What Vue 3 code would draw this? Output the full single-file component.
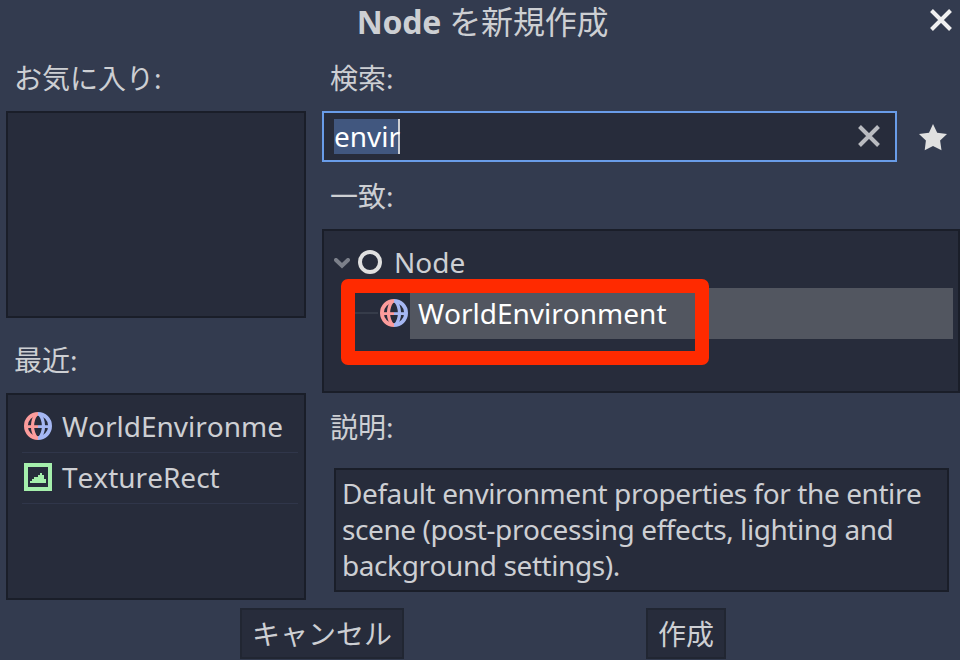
<script setup>
import { ref } from 'vue'

const query = ref('envir')

const recent = [
  { name: 'WorldEnvironme', icon: 'world' },
  { name: 'TextureRect', icon: 'texture' },
]

const description = [
  'Default environment properties for the entire',
  'scene (post-processing effects, lighting and',
  'background settings).',
]
</script>

<template>
  <div class="dialog">
    <!-- shared globe icon -->
    <svg class="defs" width="0" height="0">
      <defs>
        <clipPath id="left-half"><rect x="0" y="0" width="14" height="28" /></clipPath>
        <clipPath id="right-half"><rect x="14" y="0" width="14" height="28" /></clipPath>
        <g id="globe-lines" fill="none">
          <circle cx="14" cy="14" r="12.1" stroke-width="3.8" />
          <path d="M12.5 2C9.5 6 8.5 10 8.5 14s1 8 4 12M15.5 2c3 4 4 8 4 12s-1 8-4 12" stroke-width="3.2" />
          <path d="M2 14.6h24" stroke-width="2.8" />
        </g>
        <symbol id="globe" viewBox="0 0 28 28">
          <g clip-path="url(#left-half)" stroke="#fc9c9c"><use href="#globe-lines" /></g>
          <g clip-path="url(#right-half)" stroke="#a5b7f3"><use href="#globe-lines" /></g>
        </symbol>
      </defs>
    </svg>

    <header class="titlebar">
      <h1><b>Node</b> を新規作成</h1>
      <svg class="close" width="24" height="24" viewBox="0 0 24 24">
        <path d="M2.5 2.5l19 19M21.5 2.5l-19 19" />
      </svg>
    </header>

    <main class="body">
      <section class="left">
        <div class="label favorites-label">お気に入り:</div>
        <div class="panel favorites"></div>
        <div class="label recent-label">最近:</div>
        <div class="panel recent">
          <div v-for="item in recent" :key="item.name" class="recent-item">
            <svg v-if="item.icon === 'world'" width="28" height="28"><use href="#globe" /></svg>
            <svg v-else width="28" height="28" viewBox="0 0 28 28" shape-rendering="crispEdges">
              <path d="M2 2h24v24H2z" fill="none" stroke="#a5efac" stroke-width="4" />
              <path d="M6 20v-2h2v-2h2v-2h4v-2h2v-2h2v2h2v4h2v4z" fill="#a5efac" />
            </svg>
            <span>{{ item.name }}</span>
          </div>
        </div>
      </section>

      <section class="right">
        <div class="label search-label">検索:</div>
        <div class="search-row">
          <div class="search">
            <span class="selected">{{ query }}</span>
            <svg class="clear" width="24" height="24" viewBox="0 0 24 24" @click="query = ''">
              <path d="M2.5 2.5l19 19M21.5 2.5l-19 19" />
            </svg>
          </div>
          <svg class="star" width="28" height="27" viewBox="0 0 28 27">
            <path d="M14 0l4.2 8.8 9.8 1.3-6.9 6.3 1.4 9.9-8.5-4.2-8.3 4.2 1.2-9.9L0 10.1l10-1.3z" />
          </svg>
        </div>

        <div class="label match-label">一致:</div>
        <div class="panel tree">
          <div class="tree-row root">
            <svg class="arrow" width="16" height="11" viewBox="0 0 16 11">
              <path d="M2 2l6 5.7L14 2" />
            </svg>
            <svg class="ring" width="24" height="24" viewBox="0 0 24 24">
              <circle cx="12" cy="12" r="10" />
            </svg>
            <span>Node</span>
          </div>
          <div class="tree-row child">
            <i class="branch"></i>
            <svg class="world" width="28" height="28"><use href="#globe" /></svg>
            <span class="active">WorldEnvironment</span>
          </div>
          <div class="marker"></div>
        </div>

        <div class="label desc-label">説明:</div>
        <div class="panel description">
          <div v-for="line in description" :key="line">{{ line }}</div>
        </div>
      </section>
    </main>

    <footer class="buttons">
      <button class="cancel">キャンセル</button>
      <button class="create">作成</button>
    </footer>
  </div>
</template>

<style>
body {
  margin: 0;
  overflow: hidden;
  background: #333b4f;
}
</style>

<style scoped>
.dialog {
  width: 960px;
  height: 660px;
  overflow: hidden;
  background: #333b4f;
  color: #cdcfd3;
  font-family: "Noto Sans", "Noto Sans CJK JP", sans-serif;
  font-size: 28px;
  font-kerning: none;
  line-height: 36px;
  white-space: nowrap;
}

.dialog * {
  box-sizing: border-box;
}

svg {
  display: block;
  flex: none;
}

.defs {
  position: absolute;
}

.titlebar {
  display: grid;
  grid-template-columns: 1fr auto 1fr;
  align-items: center;
  height: 44px;
  padding: 0 7px 0 12px;
}

h1 {
  grid-column: 2;
  margin: 0 0 1px;
  font-size: 32px;
  font-weight: 400;
  letter-spacing: -0.2px;
}

.close {
  justify-self: end;
  margin-bottom: 4px;
}

.close path,
.clear path {
  fill: none;
  stroke: #f0f0f1;
  stroke-width: 4;
}

.clear path {
  stroke: #b9bbc0;
}

.body {
  display: flex;
  gap: 16px;
  height: 564px;
  padding-left: 6px;
}

.left {
  width: 300px;
}

.right {
  flex: 1;
}

.label {
  display: flex;
  align-items: center;
  padding-left: 8px;
}

.favorites-label,
.search-label {
  height: 67px;
}

.recent-label {
  height: 75px;
  padding-top: 9px;
}

.match-label {
  height: 67px;
}

.desc-label {
  height: 75px;
  padding-bottom: 7px;
}

.panel {
  border: 2px solid #1a1e29;
  background: #272c3b;
}

.favorites {
  height: 207px;
}

.recent {
  height: 207px;
  padding: 7px 6px 0 14px;
}

.recent-item {
  display: flex;
  align-items: center;
  gap: 10px;
  height: 51px;
  padding: 0 0 2px 2px;
  border-bottom: 1px solid #30364a;
}

.search-row {
  display: flex;
  align-items: center;
}

.search {
  display: flex;
  align-items: center;
  justify-content: space-between;
  width: 575px;
  height: 51px;
  padding: 0 14px 0 10px;
  border: 2px solid #699ce8;
  background: #272c3b;
}

.selected {
  width: 66px;
  height: 35px;
  line-height: 35px;
  border-right: 2px solid #cdcfd3;
  background: #41577f;
  color: #fff;
}

.clear {
  margin-bottom: 2px;
}

.star {
  margin: 2px 0 0 22px;
}

.star path {
  fill: #e0e0e0;
}

.tree {
  position: relative;
  height: 164px;
  padding: 6px 5px 0 10px;
}

.tree-row {
  display: flex;
  align-items: center;
  height: 51px;
}

.root {
  padding-bottom: 2px;
}

.arrow {
  margin-top: 4px;
}

.arrow path {
  fill: none;
  stroke: #7c808a;
  stroke-width: 4;
  stroke-linecap: round;
}

.ring {
  margin: 0 12px 0 8px;
}

.ring circle {
  fill: none;
  stroke: #e0e0e0;
  stroke-width: 4;
}

.branch {
  width: 24px;
  height: 2px;
  margin: 0 0 2px 20px;
  background: #363c4a;
}

.world {
  margin: 0 2px 2px;
}

.active {
  flex: 1;
  height: 51px;
  padding-left: 8px;
  background: #525660;
  color: #fff;
  line-height: 51px;
}

/* highlight frame drawn over the matching row */
.marker {
  position: absolute;
  left: 17px;
  top: 48px;
  width: 368px;
  height: 86px;
  border: 14px solid #ff2a00;
  border-radius: 7px;
}

.description {
  width: 615px;
  height: 124px;
  margin-left: 12px;
  padding: 5px 6px;
  letter-spacing: -0.42px;
}

.buttons {
  display: flex;
  gap: 242px;
  padding-left: 240px;
}

button {
  height: 51px;
  padding: 0;
  border: 2px solid #212632;
  background: #272c3b;
  color: inherit;
  font: inherit;
}

.cancel {
  width: 164px;
}

.create {
  width: 80px;
}
</style>
